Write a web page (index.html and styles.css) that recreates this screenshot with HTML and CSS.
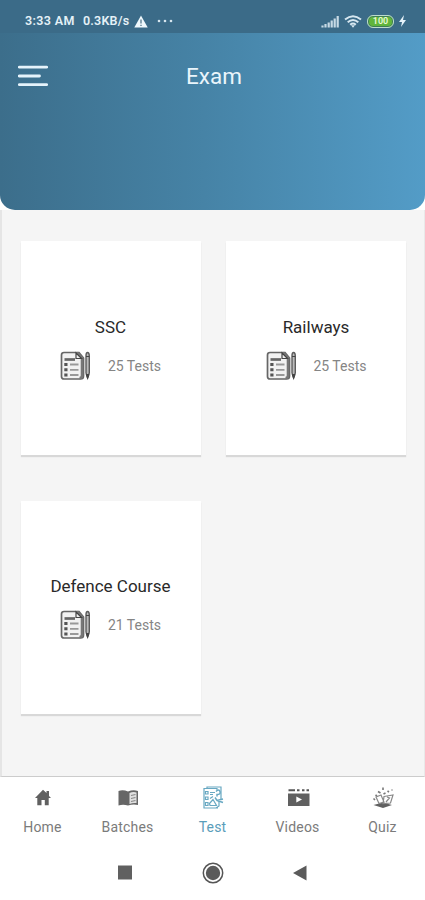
FILE: index.html
```
<!DOCTYPE html>
<html lang="en">
<head>
<meta charset="utf-8">
<title>Exam</title>
<link rel="stylesheet" href="styles.css">
</head>
<body>
<svg class="defs" width="0" height="0" aria-hidden="true">
  <symbol id="exam" viewBox="0 0 31 30">
    <path d="M4 1.500H19L23.500 7V25Q23.500 28 20.500 28H4Q1.500 28 1.500 25.500V4Q1.500 1.500 4 1.500Z" fill="#f2f2f2" stroke="#666" stroke-width="1.700"/>
    <path d="M17 1.500L22 7V24.500Q22 27 19.500 27" fill="none" stroke="#777" stroke-width="2.600"/>
    <path d="M16 2V7.500H21.500Z" fill="#eee" stroke="#444" stroke-width="1.200"/>
    <path d="M4.500 8.500H15" stroke="#666" stroke-width="2.700"/>
    <path d="M10 13.500H18.500M10 18.800H18.500M10 24H18.500" stroke="#999" stroke-width="1.800"/>
    <path d="M4.300 12H7.500V15H4.300ZM4.300 17.300H7.500V20.300H4.300ZM4.300 22.500H7.500V25.500H4.300Z" fill="#555"/>
    <path d="M26 5Q26 1.500 27.600 1.500T29.300 5V22L27.600 27L26 22Z" fill="#bbb" stroke="#5c5c5c" stroke-width="1.400"/>
    <path d="M26 5.500H29.300M26.300 23.500L27.600 27.500L29 23.500Z" fill="#444" stroke="#444"/>
  </symbol>
</svg>
<header class="header">
  <div class="status">
    <span class="time">3:33 AM</span><span class="speed">0.3KB/s</span>
    <svg class="warn" width="14" height="13" viewBox="0 0 14 13"><path d="M7 .5L13.700 12.500H.3Z" fill="#eff8fc"/><path d="M7 4.500V8.500M7 9.700V11" stroke="#56798e" stroke-width="1.300"/></svg>
    <svg class="dots" width="16" height="4" viewBox="0 0 16 4" fill="#d7e6ef"><circle cx="2" cy="2" r="1.300"/><circle cx="8" cy="2" r="1.300"/><circle cx="14" cy="2" r="1.300"/></svg>
    <span class="spacer"></span>
    <svg class="signal" width="18" height="13" viewBox="0 0 18 13"><path d="M1.500 12.500V10.500M4.500 12.500V9M7.700 12.500V7.500M10.700 12.500V5.500M13.700 12.500V3.500M16.700 12.500V1" stroke="#c7dae5" stroke-width="2.200"/></svg>
    <svg class="wifi" width="18" height="13" viewBox="0 0 18 13" fill="none" stroke="#d6e7f0" stroke-width="2"><path d="M1 4.500Q9-2 17 4.500M3.700 7.300Q9 2.800 14.300 7.300M6.200 9.700Q9 7.300 11.800 9.700"/><path d="M7 10.300H11L9 12.700Z" fill="#d6e7f0" stroke="none"/></svg>
    <span class="battery">100</span>
    <svg class="bolt" width="7" height="12" viewBox="0 0 7 12"><path d="M5 0L0 7H3L2 12L7 5H4Z" fill="#e6f3fa"/></svg>
  </div>
  <div class="titlebar">
    <svg class="menu" width="30" height="22" viewBox="0 0 30 22"><path d="M1.300 2.200H28.700M1.300 11H21.500M1.300 19.600H28.700" stroke="#e5f3fb" stroke-width="2.800" stroke-linecap="round"/></svg>
    <h1>Exam</h1>
  </div>
</header>
<main class="content">
  <article class="card"><h2>SSC</h2><div class="meta"><svg width="31" height="30"><use href="#exam"/></svg><span>25 Tests</span></div></article>
  <article class="card"><h2>Railways</h2><div class="meta"><svg width="31" height="30"><use href="#exam"/></svg><span>25 Tests</span></div></article>
  <article class="card lower"><h2>Defence Course</h2><div class="meta"><svg width="31" height="30"><use href="#exam"/></svg><span>21 Tests</span></div></article>
</main>
<nav class="tabs">
  <a><svg width="24" height="24" viewBox="0 0 24 24"><path d="M4 13L12 4.800L15.500 8V6H18V11L20 13H17.700V20.300H13.800V15H10.500V20.300H6.300V13Z" fill="#606060"/></svg><span>Home</span></a>
  <a><svg width="24" height="24" viewBox="0 0 24 24"><path d="M2.500 6Q7 4.500 12 6.500Q17 4.500 22 6V20Q17 19 12 20.500Q7 19 2.500 20.500Z" fill="#666"/><path d="M13.500 8Q17 6.500 20.500 7.500V18Q17 17.500 13.500 19Z" fill="#e0e0e0"/><path d="M15 10.500L19.500 9.500M15 13.500L19.500 12.500M15 16.500L19.500 15.500" stroke="#888" stroke-width="1.200"/></svg><span>Batches</span></a>
  <a class="active"><svg width="24" height="24" viewBox="0 0 24 24" fill="none" stroke="#68a8c2" stroke-width="1.200"><path d="M6 3.500V2H20V15M16 3.500H3V23H17M6 3.500H16V5.500M18 16V21L15 23"/><path d="M4.500 6.500H7V9H4.500ZM4.500 12H7V14.500H4.500ZM4.500 17.500H7V20.500H4.500ZM9 7.500H14M9 9.500H12M9 13.500L12 11.500M8.500 18.500L12 14.500L15.500 20.500H9Z"/><path d="M15 6.500Q18 3.500 19 6.500T16 9.500V11.500M14 12.500L16 15.500L22 14M16 15.500L22 17.500" stroke-width="1.500"/></svg><span>Test</span></a>
  <a><svg width="24" height="24" viewBox="0 0 24 24"><path d="M2 8.500H23.500V21H2Z" fill="#606060"/><path d="M2.500 5.200H9M11 5.200H13.500M16 5.200H18.500M20.500 5.200H23" stroke="#555" stroke-width="2"/><path d="M10.300 11.500V17.500L16 14.500Z" fill="#fff"/></svg><span>Videos</span></a>
  <a><svg width="24" height="24" viewBox="0 0 24 24"><path d="M2.500 20L12 17.500L21 20L12 23Z" fill="#606060"/><path d="M5 12L8 18.500L13 17L10 10ZM13 11.500L22 10L19.500 18L12 18.500ZM16 12L18.500 13L15 17" fill="none" stroke="#888" stroke-width="1.200"/><path d="M4.500 10L6 11M7 6.500L9.500 8M12 2.500V5M16.500 6L18 7M2.500 13.500L4 15M12.500 9L14.500 8M20.500 5H21.500" fill="none" stroke="#777" stroke-width="1.600"/></svg><span>Quiz</span></a>
</nav>
<footer class="system">
  <svg width="16" height="16" viewBox="0 0 16 16"><path d="M1 .5H15V14.500H1Z" fill="#606060"/></svg>
  <svg width="22" height="22" viewBox="0 0 22 22"><circle cx="11" cy="11" r="9.700" fill="#fff" stroke="#555" stroke-width="1.500"/><circle cx="11" cy="11" r="7.200" fill="#5b5b5b"/></svg>
  <svg width="16" height="16" viewBox="0 0 16 16"><path d="M1 8L14.500 .5V15.500Z" fill="#5b5b5b"/></svg>
</footer>
</body>
</html>
```
FILE: styles.css
```
* { box-sizing: border-box; }
body {
  margin: 0;
  width: 425px;
  height: 900px;
  display: flex;
  flex-direction: column;
  overflow: hidden;
  background: #fff;
  font-family: Roboto, sans-serif;
}
svg { display: block; flex: none; }
.defs { position: absolute; }
h1, h2 { margin: 0; font-weight: 400; }
.header {
  height: 210px;
  flex: none;
  background: linear-gradient(90deg, #3c6e8b 0%, #4683a6 48%, #539cc7 100%);
  border-radius: 0 0 15px 15px;
  overflow: hidden;
}
.status {
  height: 33px;
  padding: 9px 19px 0 25px;
  display: flex;
  align-items: center;
  background: #3b6b88;
  color: #e5f1f7;
  font-size: 12.5px;
  font-weight: 600;
  line-height: 24px;
}
.time { width: 58px; letter-spacing: .35px; }
.speed { width: 51px; letter-spacing: .2px; }
.dots { margin-left: 9px; }
.spacer { flex: 1; }
.wifi { margin-left: 5px; }
.battery {
  width: 27px;
  height: 13px;
  margin-left: 5px;
  border: 1px solid #bddccc;
  border-radius: 6px;
  background: #60b53c;
  box-shadow: inset 0 0 0 1px #3e7d55;
  color: #e9f9d6;
  font-size: 9px;
  line-height: 11px;
  text-align: center;
}
.bolt { margin-left: 5px; }
.titlebar {
  height: 86px;
  padding: 0 17px 0 18px;
  display: grid;
  grid-template-columns: 30px 1fr 30px;
  align-items: center;
}
h1 {
  padding-left: 2px;
  color: #eaf5fb;
  font-size: 22.5px;
  line-height: 28px;
  text-align: center;
}
.content {
  height: 567px;
  flex: none;
  padding: 31px 18px 0 18.5px;
  display: grid;
  grid-template-columns: 180px 180px;
  grid-template-rows: 213.500px 213.500px;
  gap: 46px 25.500px;
  background: #f5f5f5;
  border-left: 2px solid #e5e5e5;
  border-right: 1px solid #e9e9e9;
  border-bottom: 1px solid #ccc;
}
.card {
  padding-top: 73px;
  display: flex;
  flex-direction: column;
  align-items: center;
  background: #fff;
  box-shadow: 0 2px 1px #d8d8d8;
}
.card.lower { padding-top: 72px; }
h2 {
  color: #292929;
  font-size: 17px;
  line-height: 26px;
}
.meta {
  margin-top: 11px;
  width: 101px;
  height: 30px;
  display: flex;
  align-items: center;
  justify-content: space-between;
  color: #858585;
  font-size: 14px;
}
.tabs {
  height: 68px;
  flex: none;
  padding-top: 8px;
  display: grid;
  grid-template-columns: repeat(5, 1fr);
  color: #7b7b7b;
  font-size: 14px;
}
.tabs a {
  display: flex;
  flex-direction: column;
  align-items: center;
  gap: 8px;
  letter-spacing: .2px;
}
.tabs span { line-height: 20px; }
.tabs .active { color: #5a9dba; }
.system {
  height: 55px;
  flex: none;
  padding: 0 117px;
  display: flex;
  align-items: center;
  justify-content: space-between;
}
```
